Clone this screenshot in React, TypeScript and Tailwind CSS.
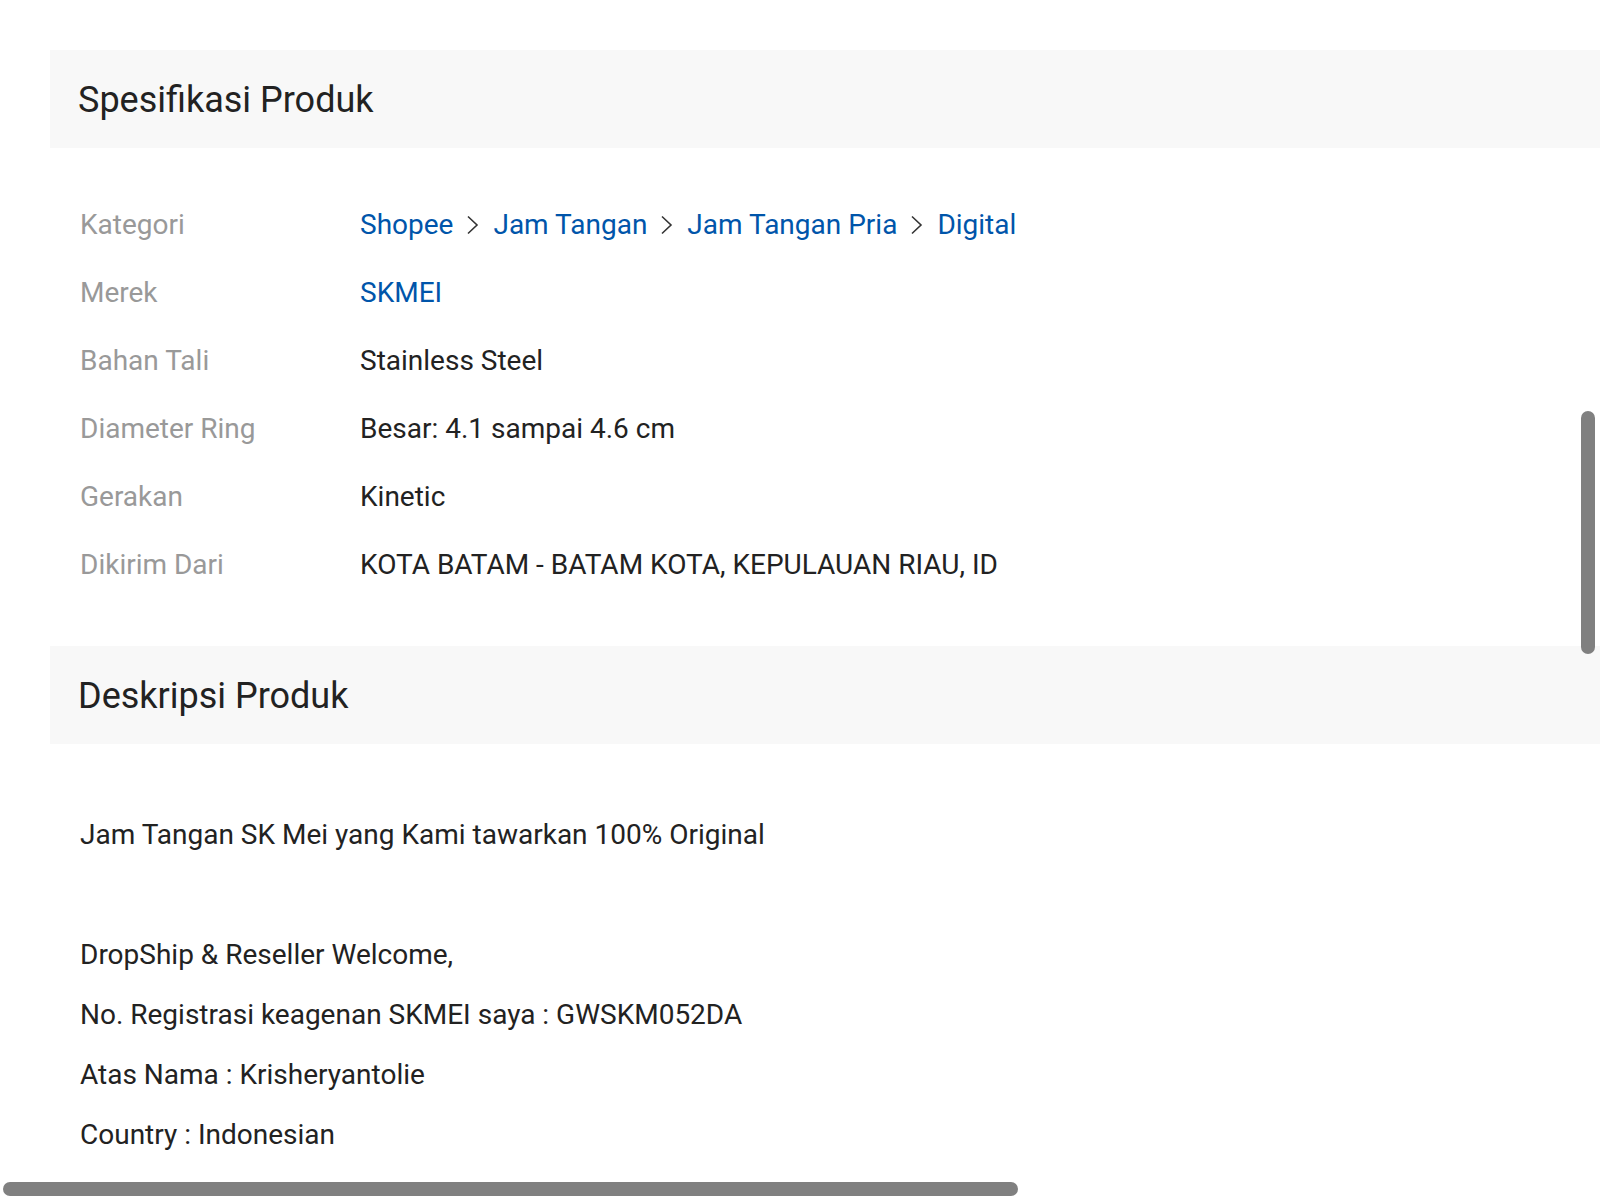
import React from 'react';

const specs: { label: string; value: React.ReactNode }[] = [
  { label: 'Merek', value: <span className="text-[#0055aa]">SKMEI</span> },
  { label: 'Bahan Tali', value: 'Stainless Steel' },
  { label: 'Diameter Ring', value: 'Besar: 4.1 sampai 4.6 cm' },
  { label: 'Gerakan', value: 'Kinetic' },
  { label: 'Dikirim Dari', value: 'KOTA BATAM - BATAM KOTA, KEPULAUAN RIAU, ID' },
];

const crumbs = ['Shopee', 'Jam Tangan', 'Jam Tangan Pria', 'Digital'];

const description = [
  'Jam Tangan SK Mei yang Kami tawarkan 100% Original',
  '',
  'DropShip & Reseller Welcome,',
  'No. Registrasi keagenan SKMEI saya : GWSKM052DA',
  'Atas Nama : Krisheryantolie',
  'Country : Indonesian',
];

function Chevron() {
  return (
    <svg width="14" height="22" viewBox="0 0 14 22" className="mx-[13px]" fill="none">
      <path d="M2 2.5 L11 11 L2 19.5" stroke="#333" strokeWidth="1.6" />
    </svg>
  );
}

function SectionTitle({ children }: { children: React.ReactNode }) {
  return (
    <div className="h-[98px] bg-[#f8f8f8] flex items-center pl-[28px] pt-[2px]">
      <h2 className="text-[36px] text-[#222] leading-none">{children}</h2>
    </div>
  );
}

function SpecRow({ label, children }: { label: string; children: React.ReactNode }) {
  return (
    <div className="flex items-center h-[68px]">
      <div className="w-[280px] shrink-0 text-[#999]">{label}</div>
      <div className="flex items-center text-[#222]">{children}</div>
    </div>
  );
}

export default function App() {
  return (
    <div className="relative w-[1600px] h-[1200px] overflow-hidden bg-white" style={{ fontFamily: 'Roboto, "Noto Sans", sans-serif' }}>
      <div className="ml-[50px] pt-[50px]">
        <SectionTitle>Spesifikasi Produk</SectionTitle>
        <div className="pt-[43px] pb-[47px] pl-[30px] text-[28px]">
          <SpecRow label="Kategori">
            {crumbs.map((c, i) => (
              <React.Fragment key={c}>
                {i > 0 && <Chevron />}
                <span className="text-[#0055aa]">{c}</span>
              </React.Fragment>
            ))}
          </SpecRow>
          {specs.map((s) => (
            <SpecRow key={s.label} label={s.label}>
              {s.value}
            </SpecRow>
          ))}
        </div>
        <SectionTitle>Deskripsi Produk</SectionTitle>
        <div className="pt-[61px] pl-[30px] text-[28px] leading-[60px] text-[#222]">
          {description.map((line, i) => (
            <p key={i} className="h-[60px]">{line}</p>
          ))}
        </div>
      </div>

      {/* overlay scrollbars */}
      <div className="absolute left-[1581px] top-[411px] w-[14px] h-[243px] rounded-full bg-[#808080]" />
      <div className="absolute left-[3px] top-[1182px] w-[1015px] h-[14px] rounded-full bg-[#808080]" />
    </div>
  );
}
